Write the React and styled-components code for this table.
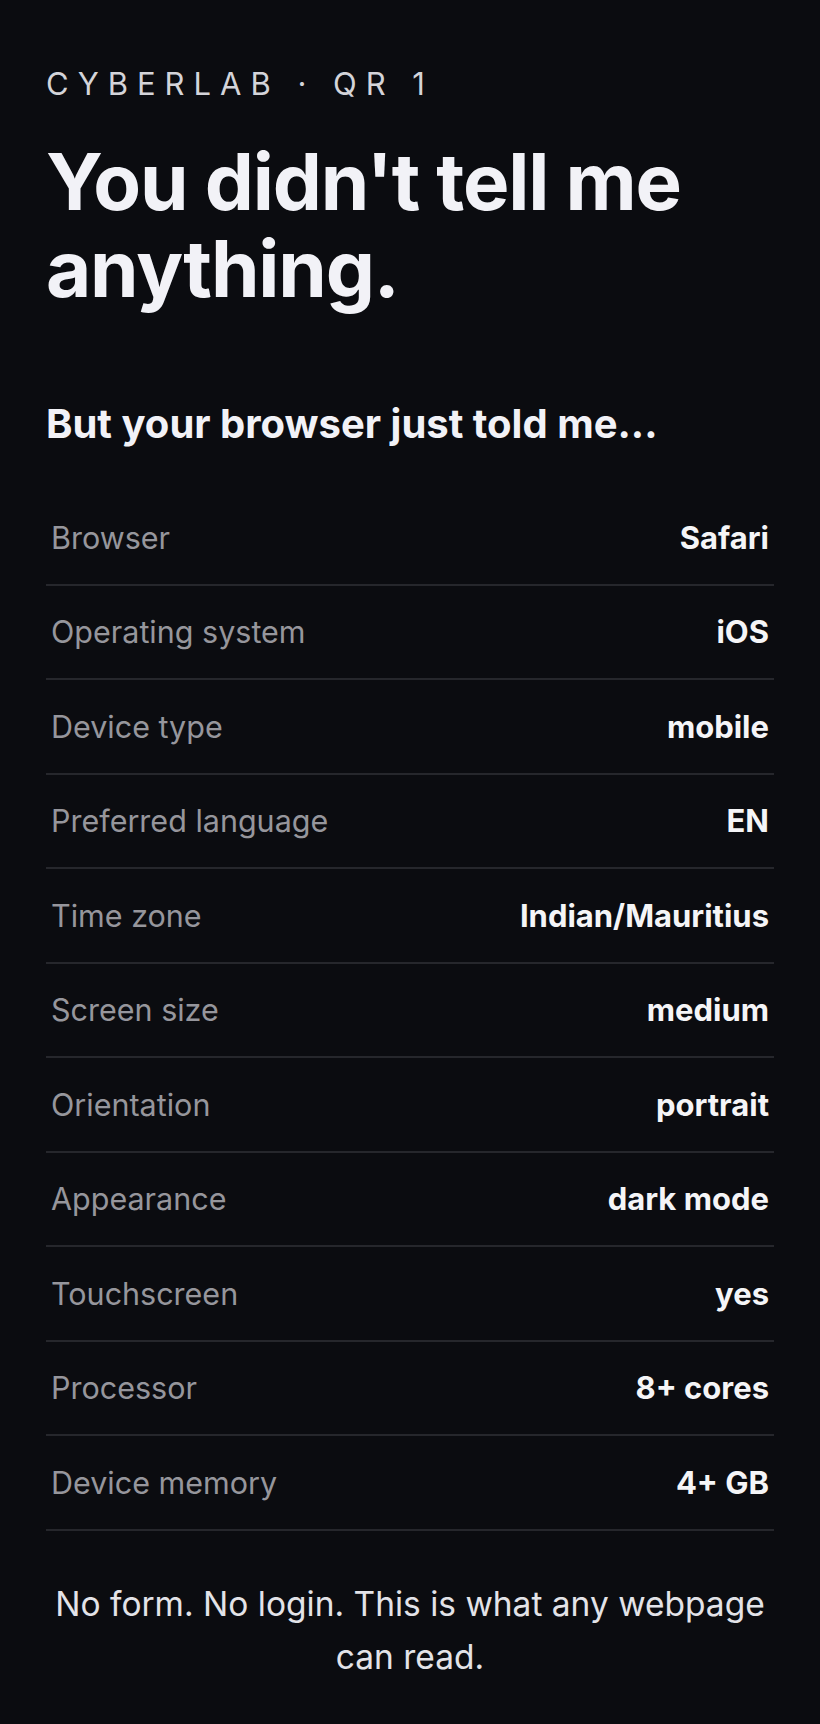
import React from 'react';
import styled, { createGlobalStyle } from 'styled-components';

const GlobalStyle = createGlobalStyle`
  html, body {
    margin: 0;
    padding: 0;
    background: #0b0c10;
  }
  * {
    box-sizing: border-box;
  }
`;

const Page = styled.main`
  min-height: 100vh;
  padding: 66px 46px 40px;
  background: #0b0c10;
  color: #f2f2f7;
  font-family: "Inter", "Liberation Sans", sans-serif;
`;

const Eyebrow = styled.div`
  font-size: 31px;
  line-height: 35px;
  font-weight: 400;
  letter-spacing: 0.29em;
  color: #d4d4d9;
`;

const Title = styled.h1`
  margin: 37px 0 0;
  font-size: 78px;
  line-height: 87px;
  font-weight: 700;
  letter-spacing: -0.015em;
  color: #f2f2f7;
`;

const Lead = styled.h2`
  margin: 89px 0 0;
  font-size: 40px;
  line-height: 46px;
  font-weight: 700;
  letter-spacing: 0;
  color: #f2f2f7;
`;

const List = styled.dl`
  margin: 44px 0 0;
  display: flex;
  flex-direction: column;
`;

const Row = styled.div`
  height: 94.5px;
  padding: 0 5px;
  display: flex;
  align-items: center;
  justify-content: space-between;
  border-bottom: 2px solid #26272c;
`;

const Key = styled.dt`
  font-size: 30.5px;
  font-weight: 400;
  color: #96969c;
`;

const Value = styled.dd`
  margin: 0;
  font-size: 31px;
  font-weight: 700;
  color: #f5f5f7;
`;

const Note = styled.p`
  margin: 47px 0 0;
  font-size: 33.5px;
  line-height: 53px;
  text-align: center;
  color: #e3e3e8;
`;

const facts = [
  ['Browser', 'Safari'],
  ['Operating system', 'iOS'],
  ['Device type', 'mobile'],
  ['Preferred language', 'EN'],
  ['Time zone', 'Indian/Mauritius'],
  ['Screen size', 'medium'],
  ['Orientation', 'portrait'],
  ['Appearance', 'dark mode'],
  ['Touchscreen', 'yes'],
  ['Processor', '8+ cores'],
  ['Device memory', '4+ GB'],
];

const App = () => (
  <>
    <GlobalStyle />
    <Page>
      <Eyebrow>CYBERLAB · QR 1</Eyebrow>
      <Title>You didn't tell me anything.</Title>
      <Lead>But your browser just told me...</Lead>
      <List>
        {facts.map(([label, value]) => (
          <Row key={label}>
            <Key>{label}</Key>
            <Value>{value}</Value>
          </Row>
        ))}
      </List>
      <Note>No form. No login. This is what any webpage can read.</Note>
    </Page>
  </>
);

export default App;
